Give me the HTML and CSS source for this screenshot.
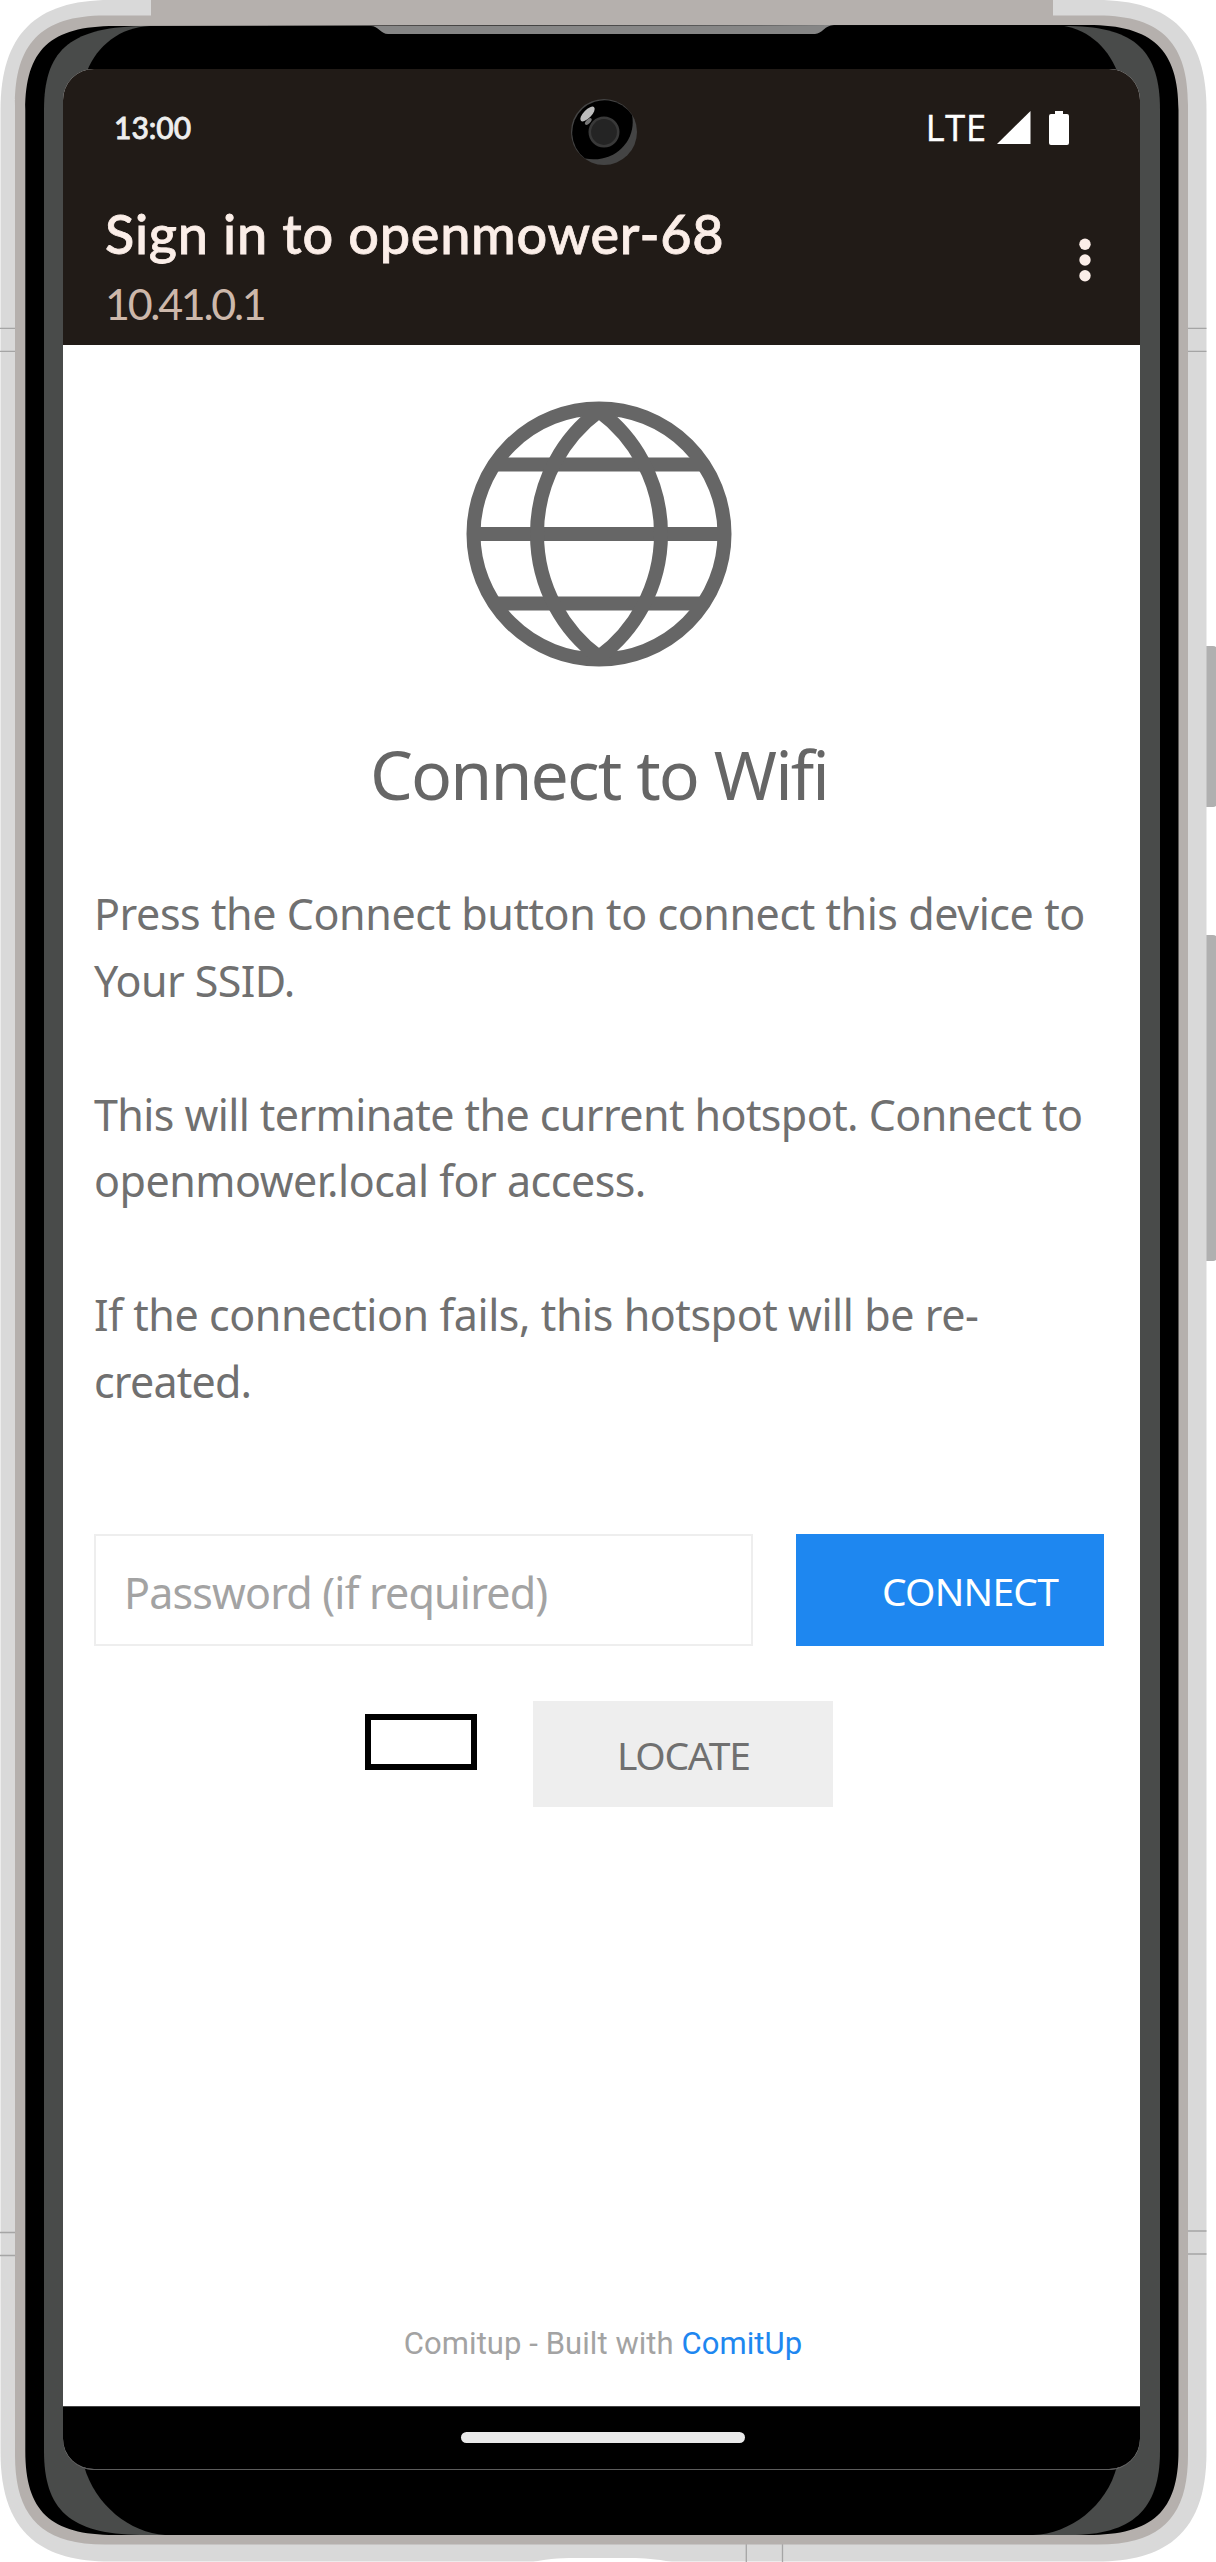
FILE: index.html
```html
<!DOCTYPE html>
<html lang="en">
<head>
<meta charset="utf-8">
<title>Sign in to openmower-68</title>
<link rel="stylesheet" href="styles.css">
</head>
<body>
<div class="device">
  <svg class="frame" viewBox="0 0 1216 2562" width="1216" height="2562" aria-hidden="true">
    <!-- side buttons -->
    <rect x="1196" y="646" width="22" height="161" rx="5" fill="#b0b0b0"/>
    <rect x="1196" y="935" width="22" height="326" rx="5" fill="#b0b0b0"/>
    <!-- outer shell -->
    <path fill="#d9d9d9" d="M0.5 110C0.5 35 35 0 110 0H1097C1172 0 1206.500 35 1206.500 110V2452C1206.500 2527 1172 2561.500 1097 2561.500H110C35 2561.500 0.500 2527 0.500 2452Z"/>
    <path fill="#fff" d="M533 2562C550 2558 565 2558 580 2558H630C645 2558 655 2559 672 2562Z"/>
    <path fill="none" stroke="#a5a5a5" stroke-width="1.300" d="M0 328.300H16M0 351.300H16M0 2232.500H16M0 2255.500H16M1187 328.300H1206.500M1187 351.300H1206.500M1187 2231H1206.500M1187 2254H1206.500M746.300 2543V2562M782.500 2543V2562"/>
    <!-- metal band -->
    <path fill="#b5b0ad" d="M15 105C15 45 40 15.500 105 15.500H151V0H1053V15.500H1098C1163 15.500 1188 45 1188 105V2455C1188 2515 1163 2544.500 1098 2544.500H105C40 2544.500 15 2515 15 2455Z"/>
    <path fill="#000" d="M25.300 110C25.300 50 50 26 115 26L1088 25C1153 25 1178.500 50 1178.500 110V2451C1178.500 2511 1153 2535 1088 2535H115C50 2535 25.300 2511 25.300 2451Z"/>
    <!-- glass edge -->
    <path fill="#494b4a" d="M44 110C44 52 68 28 140 26H1070C1136 27 1160 52 1160 110V2451C1160 2510 1132 2535 1070 2535H140C70 2534 44 2510 44 2451Z"/>
    <path fill="#000" d="M87 71C97 46 120 27 150 26L1056 25C1086 27 1107 46 1117 71V2466C1107 2506 1070 2534 1033 2535H165C130 2533 95 2505 84 2466Z"/>
    <path fill="#868686" d="M371 26C378 26 381 34 388 34H815C822 34 825 25 834 25Z"/>
  </svg>

  <main class="screen">
    <div class="status">
      <span class="clock">13:00</span>
      <span class="network">LTE</span>
      <svg class="signal" width="34" height="33" viewBox="0 0 34 33"><path fill="#fff" d="M0 33L33.500 0V33Z"/></svg>
      <svg class="battery" width="20" height="34" viewBox="0 0 20 34"><path fill="#fff" d="M6 3V0H14V3H18Q20 3 20 5V32Q20 34 18 34H2Q0 34 0 32V5Q0 3 2 3Z"/></svg>
    </div>
    <header class="bar">
      <div class="titles">
        <h1 class="title">Sign in to openmower-68</h1>
        <p class="address">10.41.0.1</p>
      </div>
      <svg class="more" width="12" height="44" viewBox="0 0 12 44" fill="#fbeee8"><circle cx="6" cy="6.300" r="5.700"/><circle cx="6" cy="22" r="5.700"/><circle cx="6" cy="37.700" r="5.700"/></svg>
    </header>

    <section class="portal">
      <svg class="globe" width="266" height="266" viewBox="0 0 266 266" fill="none" stroke="#666" stroke-width="14">
        <circle cx="133" cy="133" r="125.500"/>
        <path d="M28 63.500H238M7 133H259M28 202.500H238"/>
        <path d="M133 10A153 153 0 0 0 133 256A153 153 0 0 0 133 10Z"/>
      </svg>
      <h2 class="heading"><span>Connect to Wifi</span></h2>
      <div class="info">
        <p><span class="l1">Press the Connect button to connect this device to</span><br><span class="l2">Your SSID.</span></p>
        <p><span class="l3">This will terminate the current hotspot. Connect to</span><br><span class="l4">openmower.local for access.</span></p>
        <p><span class="l5">If the connection fails, this hotspot will be re-</span><br><span class="l6">created.</span></p>
      </div>
      <form class="form">
        <div class="field"><span>Password (if required)</span></div>
        <div class="button primary"><span>CONNECT</span></div>
      </form>
      <div class="actions">
        <div class="swatch"></div>
        <div class="button locate"><span>LOCATE</span></div>
      </div>
      <footer class="footer"><span>Comitup - Built with <a class="link">ComitUp</a></span></footer>
    </section>
    <nav class="navbar"><div class="handle"></div></nav>
  </main>

  <svg class="camera" width="68" height="68" viewBox="-34 -34 68 68" aria-hidden="true">
    <circle r="33" fill="#444"/>
    <path fill="#000" d="M28 -17A32.500 32.500 0 1 0 -19 26.500C12 32 33 7 28 -17Z"/>
    <circle r="14.200" fill="#242424" stroke="#393939" stroke-width="2.600"/>
    <ellipse cx="-16.500" cy="-18" rx="9.500" ry="4" transform="rotate(-46 -16.500 -18)" fill="#bcbcbc"/>
    <ellipse cx="-15.700" cy="-10.500" rx="4.300" ry="2" transform="rotate(-46 -15.700 -10.500)" fill="#777"/>
  </svg>
</div>
</body>
</html>
```
FILE: styles.css
```css
* { box-sizing: border-box; }
body { margin: 0; background: #fff; }
h1, h2, p { margin: 0; font-weight: 400; }
span { white-space: nowrap; }

.device { position: relative; width: 1216px; height: 2562px; padding: 69px 76px 93px 63px; overflow: hidden; }
.frame { position: absolute; left: 0; top: 0; }
.camera { position: absolute; left: 569.5px; top: 97.5px; }

.screen {
  position: relative;
  display: flex;
  flex-direction: column;
  width: 1077px;
  height: 2401px;
  overflow: hidden;
  border-radius: 31px;
  border-bottom: 1px solid #5c5c5c;
  background: #fff;
}

.status {
  display: flex;
  align-items: flex-start;
  height: 116px;
  padding: 40px 71px 0 51px;
  background: #211b17;
  color: #fff;
}
.clock { margin-right: auto; font: 500 30px/37px Lato, sans-serif; color: #eee; -webkit-text-stroke: 0.8px #eee; }
.network { margin-right: 10px; font: 500 36px/38px "Open Sans", sans-serif; letter-spacing: 0.9px; -webkit-text-stroke: 0.5px #fff; }
.signal { margin: 2px 18px 0 0; }
.battery { margin-top: 2px; }

.bar {
  display: flex;
  justify-content: space-between;
  height: 160px;
  padding: 15px 49px 0 42px;
  background: #211b17;
}
.title { font: 500 54px/68px Lato, sans-serif; letter-spacing: 0.74px; color: #fbeee8; -webkit-text-stroke: 0.8px #fbeee8; }
.address { margin-top: 8px; font: 400 43px/56px Lato, sans-serif; letter-spacing: -2.3px; color: #cdb8ab; }
.more { margin-top: 38px; }

.portal {
  display: flex;
  flex-direction: column;
  height: 2061px;
  padding: 56px 36px 0 31px;
  font-family: "Noto Sans", sans-serif;
  font-variant-ligatures: none;
  color: #707070;
}
.globe { align-self: center; }
.heading { margin-top: 62px; text-align: center; font-size: 68px; line-height: 90px; color: #666; letter-spacing: -1.9px; }
.info { display: flex; flex-direction: column; gap: 67px; margin-top: 62px; font-size: 43px; line-height: 66.8px; }
.l1, .l5 { letter-spacing: -0.43px; }
.l2 { letter-spacing: -0.6px; }
.l3 { letter-spacing: -0.58px; }
.l4 { letter-spacing: -0.5px; }
.l6 { letter-spacing: -0.8px; }
.form { display: flex; justify-content: space-between; margin-top: 118px; }
.field { width: 659px; height: 112px; padding-left: 28px; border: 2px solid #eee; font-size: 43px; line-height: 113px; letter-spacing: -0.82px; color: #a3a3a3; }
.button { font-size: 39px; }
.primary { width: 308px; height: 112px; padding-left: 86px; background: #1e87f0; color: #fff; line-height: 113px; letter-spacing: -0.8px; }
.actions { display: flex; gap: 56px; margin: 55px 0 0 271px; }
.swatch { width: 112px; height: 56px; margin-top: 13px; border: 6px solid #000; }
.locate { width: 300px; height: 106px; padding-left: 84px; background: #eee; line-height: 108px; letter-spacing: -1.3px; }
.footer { margin: auto 0 43px 8px; text-align: center; font: 400 31px/38px Roboto, sans-serif; letter-spacing: 0.07px; color: #a3a3a3; }
.link { color: #1e87f0; }

.navbar { display: flex; justify-content: center; height: 63px; padding: 25px 0 0 2px; background: #000; border-top: 1px solid #444; }
.handle { width: 284px; height: 11px; border-radius: 6px; background: #eaeaea; }
```
